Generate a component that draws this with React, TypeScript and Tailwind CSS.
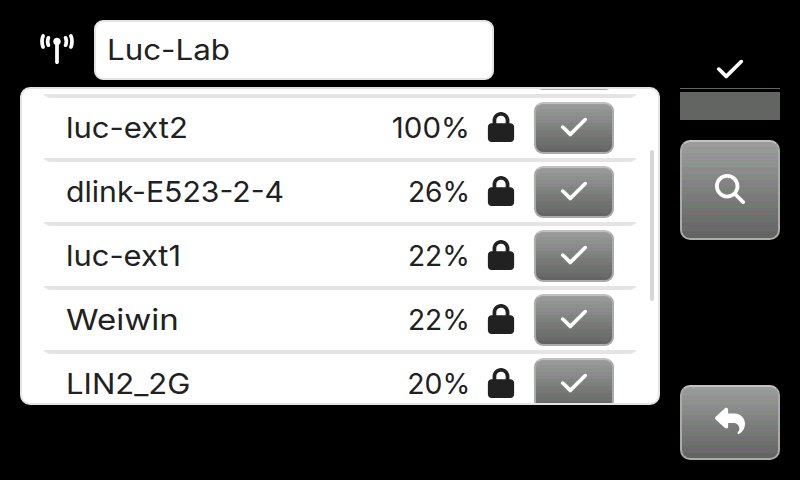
import React from "react";
import { FaCheck, FaLock, FaMagnifyingGlass, FaReply, FaTowerBroadcast } from "react-icons/fa6";

type Network = { name: string; scale: string; signal: string; signalScale: string };

const networks: Network[] = [
  { name: "", scale: "", signal: "", signalScale: "" },
  { name: "luc-ext2", scale: "scale-x-[1.07]", signal: "100%", signalScale: "scale-x-[1.015]" },
  { name: "dlink-E523-2-4", scale: "scale-x-[1.04]", signal: "26%", signalScale: "scale-x-[0.97]" },
  { name: "luc-ext1", scale: "scale-x-[1.065]", signal: "22%", signalScale: "scale-x-[0.97]" },
  { name: "Weiwin", scale: "scale-x-[1.14]", signal: "22%", signalScale: "scale-x-[0.97]" },
  { name: "LIN2_2G", scale: "scale-x-[1.07]", signal: "20%", signalScale: "scale-x-[0.98]" },
];

// Shaded button face in the stepped greys of a 16-bit colour display.
const face =
  "border-2 border-[#ababab] border-t-[#c2c2c2] bg-origin-border text-white bg-[linear-gradient(#9c9a9c_0_7%,#949a94_7%_13%,#949294_13%_20%,#8c928c_20%_27%,#8c8a8c_27%_34%,#848a84_34%_40%,#848284_40%_47%,#7b827b_47%_54%,#7b797b_54%_61%,#737973_61%_68%,#737173_68%_75%,#6b716b_75%_82%,#6b696b_82%_91%,#636563_91%_100%)]";

function NetworkRow({ name, scale, signal, signalScale }: Network) {
  return (
    <li className="h-16 shrink-0 flex flex-col">
      <div className="h-[60px] flex items-center px-[22px]">
        <span className={`pb-0.5 origin-left whitespace-nowrap ${scale}`}>{name}</span>
        <span className={`pb-0.5 ml-auto origin-right ${signalScale}`}>{signal}</span>
        <FaLock className="ml-[17px] mb-0.5 h-[30px] w-[28px]" />
        <button className={`ml-[19px] h-[52px] w-20 rounded-[9px] flex items-center justify-center pb-0.5 ${face}`}>
          <FaCheck size={30} />
        </button>
      </div>
      <div className="h-1 bg-[#e6e3e6] [border-radius:0_0_8px_8px/0_0_4px_4px]" />
    </li>
  );
}

export default function App() {
  return (
    <main className="w-[800px] h-[480px] bg-black overflow-hidden flex font-['Inter',sans-serif] text-[29px] leading-none text-[#212121]">
      <section className="w-[660px] pl-5 pt-5 flex flex-col">
        <header className="flex h-[60px]">
          <div className="w-[74px] flex items-center justify-center pb-[3px] text-white">
            <FaTowerBroadcast className="w-[34px] h-[30px]" />
          </div>
          <div className="w-[400px] rounded-[9px] border-2 border-[#e6e3e6] bg-white flex items-center pl-[11px] pb-0.5">
            <span className="origin-left scale-x-[1.08]">Luc-Lab</span>
          </div>
        </header>
        <div className="mt-[7px] h-[318px] rounded-[10px] border-2 border-[#e6e3e6] bg-white overflow-hidden flex pl-[22px]">
          <ul className="w-[592px] -mt-[55px] flex flex-col">
            {networks.map((n) => <NetworkRow key={n.name} {...n} />)}
          </ul>
          <div className="ml-[14px] mt-[61px] w-1 h-[151px] rounded-full bg-[#d6d6d6]" />
        </div>
      </section>
      <aside className="w-[140px] px-5 pb-5 flex flex-col">
        <div className="h-[88px] flex items-end justify-center text-white pb-1">
          <FaCheck size={30} />
        </div>
        <div className="h-px bg-[#636563]" />
        <div className="mt-[3px] h-7 bg-[#636563]" />
        <button className={`mt-5 h-[100px] rounded-[10px] flex items-center justify-center pb-0.5 ${face}`}>
          <FaMagnifyingGlass size={30} />
        </button>
        <button className={`mt-auto h-[75px] rounded-[10px] flex items-center justify-center pb-[3px] ${face}`}>
          <FaReply size={30} />
        </button>
      </aside>
    </main>
  );
}
